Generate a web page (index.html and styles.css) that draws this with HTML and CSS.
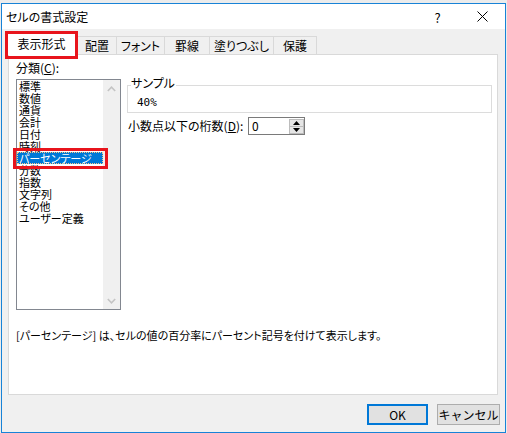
FILE: index.html
```html
<!DOCTYPE html>
<html lang="ja">
<head>
<meta charset="utf-8">
<title>セルの書式設定</title>
<link rel="stylesheet" href="styles.css">
</head>
<body>
<div class="window">
  <div class="titlebar">
    <span class="title">セルの書式設定</span>
    <div class="caption-buttons">
      <span class="cap-btn help">?</span>
      <span class="cap-btn close">
        <svg width="11" height="11" viewBox="0 0 11 11"><path d="M0.5 0.5 L10.5 10.5 M10.5 0.5 L0.5 10.5" stroke="#000" stroke-width="1" fill="none"/></svg>
      </span>
    </div>
  </div>
  <div class="body">
    <div class="tabs">
      <div class="tab selected w1">表示形式</div>
      <div class="tab w2">配置</div>
      <div class="tab w3">フォント</div>
      <div class="tab w4">罫線</div>
      <div class="tab w5">塗りつぶし</div>
      <div class="tab w6">保護</div>
    </div>
    <div class="panel">
      <div class="columns">
        <div class="left-col">
          <div class="label">分類(<u>C</u>):</div>
          <div class="listbox">
            <ul class="items">
              <li>標準</li>
              <li>数値</li>
              <li>通貨</li>
              <li>会計</li>
              <li>日付</li>
              <li>時刻</li>
              <li class="sel">パーセンテージ</li>
              <li>分数</li>
              <li>指数</li>
              <li>文字列</li>
              <li>その他</li>
              <li>ユーザー定義</li>
            </ul>
            <div class="scrollbar">
              <span class="arrow"><svg width="9" height="6" viewBox="0 0 9 6"><polyline points="0.8,5 4.5,1.2 8.2,5" stroke="#c4c4c4" stroke-width="1.6" fill="none"/></svg></span>
              <span class="arrow"><svg width="9" height="6" viewBox="0 0 9 6"><polyline points="0.8,1 4.5,4.8 8.2,1" stroke="#c4c4c4" stroke-width="1.6" fill="none"/></svg></span>
            </div>
          </div>
        </div>
        <div class="right-col">
          <div class="group">
            <span class="legend">サンプル</span>
            <div class="sample">40%</div>
          </div>
          <div class="spin-row">
            <span class="spin-label">小数点以下の桁数(<u>D</u>):</span>
            <div class="spin">
              <span class="spin-value">0</span>
              <div class="spin-btns">
                <span class="sb"><svg width="7" height="4" viewBox="0 0 7 4"><polygon points="0,4 3.5,0 7,4" fill="#000"/></svg></span>
                <span class="sb"><svg width="7" height="4" viewBox="0 0 7 4"><polygon points="0,0 3.5,4 7,0" fill="#000"/></svg></span>
              </div>
            </div>
          </div>
        </div>
      </div>
      <p class="desc">[パーセンテージ] は、セルの値の百分率にパーセント記号を付けて表示します。</p>
    </div>
    <div class="buttons">
      <button class="btn ok">OK</button>
      <button class="btn">キャンセル</button>
    </div>
  </div>
  <div class="mark mark-tab"></div>
  <div class="mark mark-item"></div>
</div>
</body>
</html>
```

FILE: styles.css
```css
html {
  background: #ececec;
}
body {
  margin: 0;
  font-family: "Noto Sans CJK JP", "Noto Sans", sans-serif;
  font-size: 12px;
  color: #000;
  font-feature-settings: "palt";
}
.window {
  position: relative;
  margin: 3px 0 0 1px;
  width: 505px;
  height: 430px;
  box-sizing: border-box;
  border: 1px solid #1883d7;
  background: #f0f0f0;
  display: flex;
  flex-direction: column;
}
.titlebar {
  height: 25px;
  flex: none;
  background: #fff;
  display: flex;
  align-items: center;
  padding-left: 4px;
}
.title {
  line-height: 14px;
  font-size: 12px;
}
.caption-buttons {
  margin-left: auto;
  display: flex;
  height: 100%;
}
.cap-btn {
  width: 45px;
  display: flex;
  align-items: center;
  justify-content: center;
}
.help {
  font-size: 13px;
  padding-top: 1px;
}
.close svg {
  display: block;
}
.body {
  flex: 1;
  display: flex;
  flex-direction: column;
  padding: 4px 7px 0 6px;
}
.tabs {
  display: flex;
  align-items: flex-end;
  height: 22px;
  margin-bottom: -1px;
  margin-left: -2px;
  position: relative;
  z-index: 1;
}
.tab {
  box-sizing: border-box;
  height: 19px;
  border: 1px solid #d9d9d9;
  background: #f0f0f0;
  display: flex;
  align-items: center;
  justify-content: center;
  line-height: 14px;
  margin-left: -1px;
}
.tab.selected {
  height: 22px;
  background: #fff;
  border-bottom: none;
  margin-left: 0;
  padding-bottom: 2px;
}
.w1 { width: 71px; }
.w2 { width: 40px; margin-left: 0; }
.w3 { width: 49px; }
.w4 { width: 46px; }
.w5 { width: 65px; }
.w6 { width: 44px; }
.panel {
  flex: none;
  box-sizing: border-box;
  width: 490px;
  height: 341px;
  background: #fff;
  border: 1px solid #d9d9d9;
  padding: 6px 0 0 7px;
}
.columns {
  display: flex;
  gap: 6px;
}
.left-col {
  width: 105px;
  flex: none;
}
.label {
  line-height: 14px;
  margin-bottom: 4px;
}
.listbox {
  box-sizing: border-box;
  height: 231px;
  border: 1px solid #828790;
  display: flex;
}
.items {
  list-style: none;
  margin: 0;
  padding: 0;
  flex: 1;
}
.items li {
  height: 12px;
  line-height: 12px;
  font-size: 11px;
  padding-left: 2px;
  white-space: nowrap;
}
.items li.sel {
  background: #0078d7;
  color: #fff;
  outline: 1px dotted #f7c98a;
  outline-offset: -1px;
}
.scrollbar {
  width: 17px;
  flex: none;
  background: #f0f0f0;
  display: flex;
  flex-direction: column;
  justify-content: space-between;
}
.arrow {
  height: 17px;
  display: flex;
  align-items: center;
  justify-content: center;
}
.arrow svg {
  display: block;
}
.right-col {
  width: 365px;
  flex: none;
}
.group {
  margin-top: 24px;
  box-sizing: border-box;
  height: 28px;
  border: 1px solid #dcdcdc;
}
.legend {
  display: block;
  width: fit-content;
  margin: -10px 0 0 3px;
  padding: 0 1px 0 0;
  background: #fff;
  line-height: 14px;
}
.sample {
  margin-top: 6px;
  padding-left: 9px;
  line-height: 14px;
  font-size: 11px;
  font-family: "DejaVu Sans Mono", "Liberation Mono", monospace;
}
.spin-row {
  display: flex;
  align-items: center;
  margin-top: 4px;
  height: 18px;
}
.spin-label {
  width: 120px;
  margin-left: 1px;
  line-height: 14px;
  white-space: nowrap;
}
.spin {
  box-sizing: border-box;
  width: 57px;
  height: 18px;
  border: 1px solid #7a7a7a;
  display: flex;
}
.spin-value {
  flex: 1;
  padding-left: 3px;
  line-height: 16px;
}
.spin-btns {
  width: 15px;
  display: flex;
  flex-direction: column;
  padding: 1px 0 0 0;
}
.sb {
  flex: 1;
  box-sizing: border-box;
  background: #e5e5e5;
  border: 1px solid #bcbcbc;
  display: flex;
  align-items: center;
  justify-content: center;
}
.sb + .sb {
  border-top: none;
}
.sb svg {
  display: block;
}
.desc {
  margin: 18px 0 0 0;
  line-height: 14px;
  font-size: 11px;
  white-space: nowrap;
}
.buttons {
  display: flex;
  justify-content: flex-end;
  gap: 9px;
  margin-top: 9px;
  margin-right: -2px;
}
.btn {
  box-sizing: border-box;
  height: 21px;
  width: 63px;
  border: 1px solid #adadad;
  background: #e1e1e1;
  font-family: inherit;
  font-size: 12px;
  line-height: 14px;
  padding: 0;
  color: #000;
}
.btn.ok {
  width: 61px;
  border: 2px solid #0078d7;
}
.mark {
  position: absolute;
  box-sizing: border-box;
  border: 3px solid #e8141c;
  z-index: 5;
}
.mark-tab {
  left: 3px;
  top: 27px;
  width: 73px;
  height: 28px;
}
.mark-item {
  left: 11px;
  top: 144px;
  width: 95px;
  height: 21px;
}
```
